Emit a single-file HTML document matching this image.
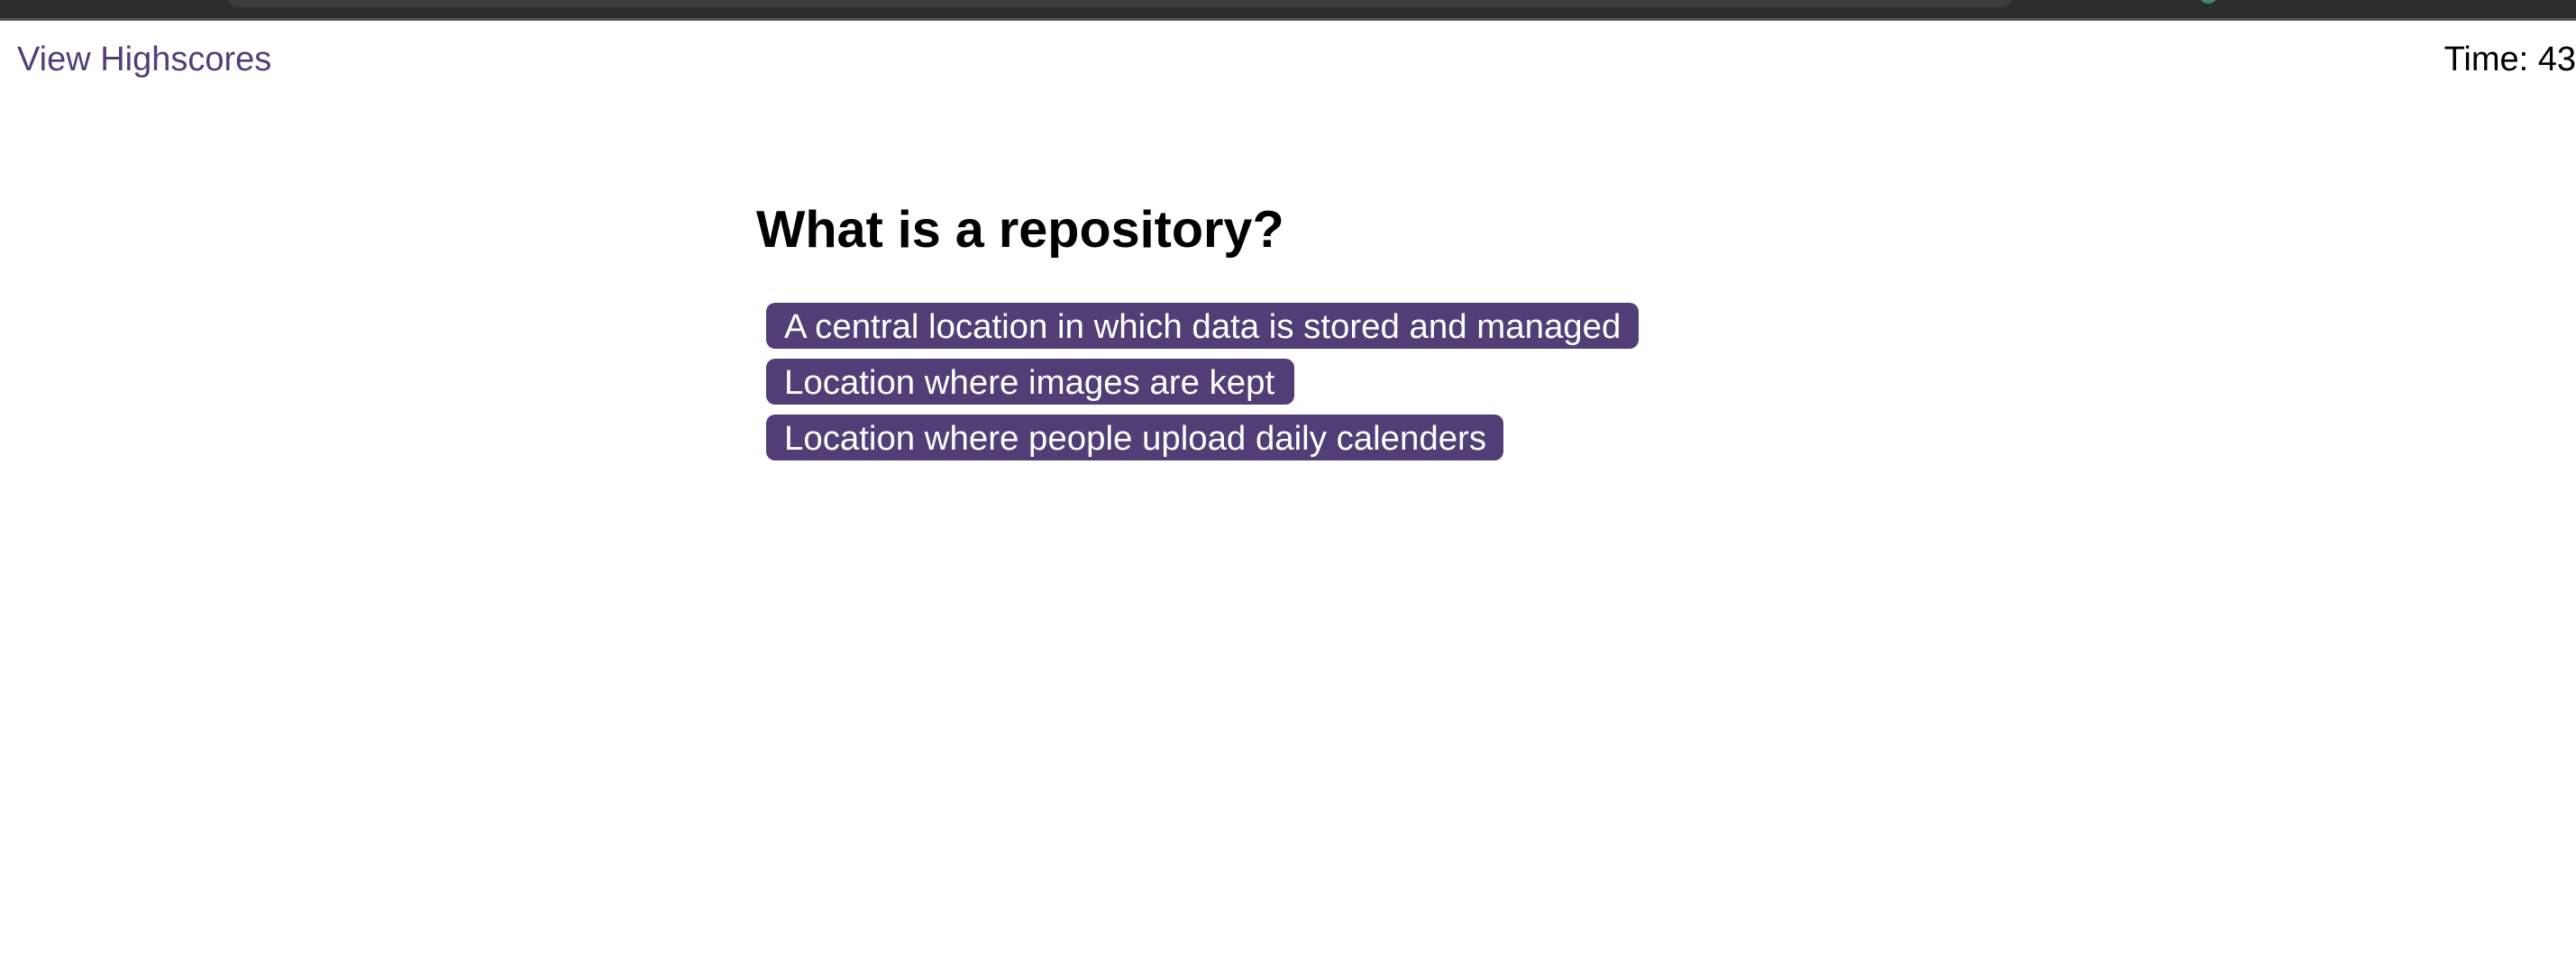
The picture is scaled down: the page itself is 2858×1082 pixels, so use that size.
<!DOCTYPE html>
<html><head><meta charset="utf-8"><style>
html,body{margin:0;padding:0;background:#fff;}
body{width:2858px;height:1082px;position:relative;overflow:hidden;font-family:"Liberation Sans",Arial,sans-serif;}
.bar{position:absolute;left:0;top:0;width:2858px;height:20px;background:#2d2d2d;}
.line{position:absolute;left:0;top:20px;width:2858px;height:3px;background:#555;}
.tab{position:absolute;left:250px;top:-10px;width:1985px;height:18px;background:#3d3d3d;border-radius:0 0 16px 16px;}
.dot{position:absolute;left:2440px;top:-14px;width:20px;height:18px;border-radius:50%;background:#3f8a6c;}
.hs{position:absolute;left:19px;top:45px;font-size:38px;color:#523e77;white-space:nowrap;}
.time{position:absolute;right:0px;top:45px;font-size:38px;color:#000;white-space:nowrap;}
h1{position:absolute;left:839px;top:222px;margin:0;font-size:57.6px;font-weight:bold;white-space:nowrap;}
.b{position:absolute;left:850px;height:51px;box-sizing:border-box;padding:5px 0 0 20px;background:#523e77;color:#fff;font-size:38.4px;line-height:43px;border-radius:10px;white-space:nowrap;}
</style></head><body>
<div class="bar"><div class="tab"></div><div class="dot"></div></div>
<div class="line"></div>
<div class="hs">View Highscores</div>
<div class="time">Time: 43</div>
<h1>What is a repository?</h1>
<div class="b" style="top:336px;width:968px;">A central location in which data is stored and managed</div>
<div class="b" style="top:398px;width:586px;">Location where images are kept</div>
<div class="b" style="top:460px;width:818px;">Location where people upload daily calenders</div>
</body></html>
